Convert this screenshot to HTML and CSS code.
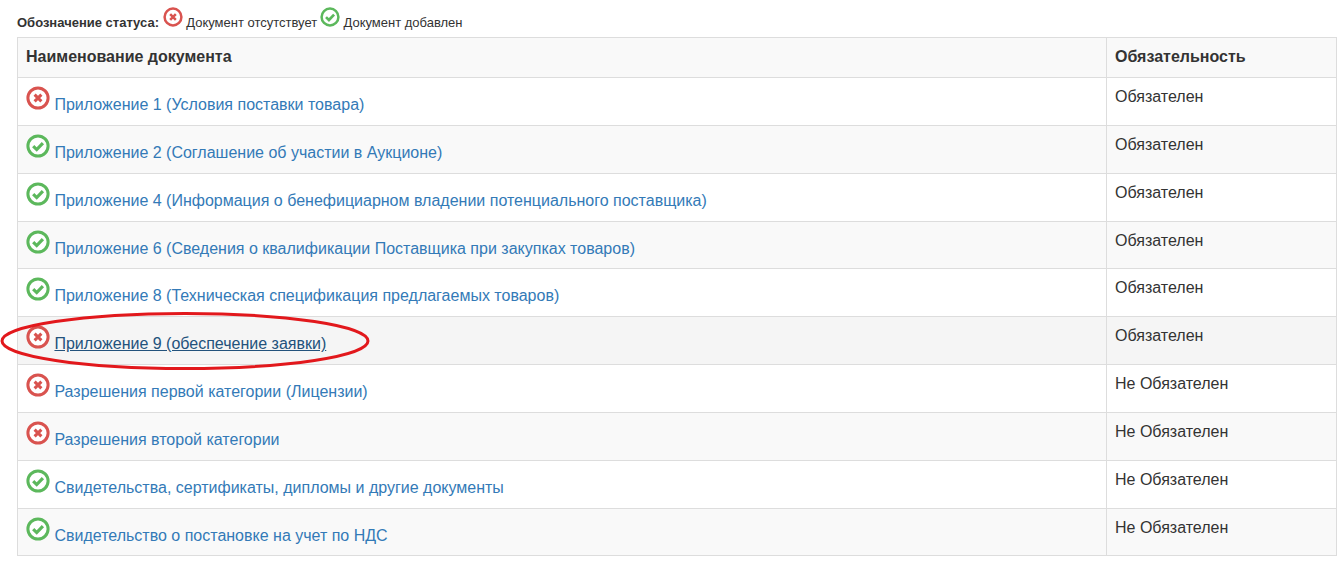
FILE: index.html
```html
<!DOCTYPE html>
<html lang="ru">
<head>
<meta charset="utf-8">
<title>Документы</title>
<link rel="stylesheet" href="styles.css">
</head>
<body>
<svg width="0" height="0" class="defs">
  <symbol id="no" viewBox="0 0 24 24"><circle cx="12" cy="12" r="10.1" fill="#fff" stroke="#d9534f" stroke-width="3"/><path d="M8.6 8.6l6.8 6.8M15.4 8.6l-6.8 6.8" fill="none" stroke="#d9534f" stroke-width="3"/></symbol>
  <symbol id="yes" viewBox="0 0 24 24"><circle cx="12" cy="12" r="10.1" fill="#fff" stroke="#5cb85c" stroke-width="3"/><path d="M7.2 12.2l3.5 3.4 6.2-6.4" fill="none" stroke="#5cb85c" stroke-width="3.2"/></symbol>
</svg>
<main class="page">
  <p class="legend"><b>Обозначение статуса:</b> <svg class="ico-s"><use href="#no"/></svg> Документ отсутствует <svg class="ico-s ico-tight"><use href="#yes"/></svg> Документ добавлен</p>
  <table class="docs">
    <thead><tr><th class="name">Наименование документа</th><th class="req">Обязательность</th></tr></thead>
    <tbody>
      <tr><td><svg class="ico"><use href="#no"/></svg> <a href="#">Приложение 1 (Условия поставки товара)</a></td><td>Обязателен</td></tr>
      <tr><td><svg class="ico"><use href="#yes"/></svg> <a href="#">Приложение 2 (Соглашение об участии в Аукционе)</a></td><td>Обязателен</td></tr>
      <tr><td><svg class="ico"><use href="#yes"/></svg> <a href="#">Приложение 4 (Информация о бенефициарном владении потенциального поставщика)</a></td><td>Обязателен</td></tr>
      <tr><td><svg class="ico"><use href="#yes"/></svg> <a href="#">Приложение 6 (Сведения о квалификации Поставщика при закупках товаров)</a></td><td>Обязателен</td></tr>
      <tr><td><svg class="ico"><use href="#yes"/></svg> <a href="#">Приложение 8 (Техническая спецификация предлагаемых товаров)</a></td><td>Обязателен</td></tr>
      <tr class="hover"><td><svg class="ico"><use href="#no"/></svg> <a href="#">Приложение 9 (обеспечение заявки)</a></td><td>Обязателен</td></tr>
      <tr><td><svg class="ico"><use href="#no"/></svg> <a href="#">Разрешения первой категории (Лицензии)</a></td><td>Не Обязателен</td></tr>
      <tr><td><svg class="ico"><use href="#no"/></svg> <a href="#">Разрешения второй категории</a></td><td>Не Обязателен</td></tr>
      <tr><td><svg class="ico"><use href="#yes"/></svg> <a href="#">Свидетельства, сертификаты, дипломы и другие документы</a></td><td>Не Обязателен</td></tr>
      <tr><td><svg class="ico"><use href="#yes"/></svg> <a href="#">Свидетельство о постановке на учет по НДС</a></td><td>Не Обязателен</td></tr>
    </tbody>
  </table>
  <svg class="mark" width="372" height="60" viewBox="0 0 372 60"><ellipse cx="185" cy="29" rx="183" ry="27.5" fill="none" stroke="#e2181c" stroke-width="3"/></svg>
</main>
</body>
</html>
```
FILE: styles.css
```css
html, body { margin: 0; padding: 0; background: #fff; }
body { font-family: "Liberation Sans", Arial, sans-serif; font-size: 16px; line-height: 22.857px; color: #333; }
.defs { position: absolute; }
.page { position: relative; padding: 7px 5px 0 17px; }
.legend { margin: 0 0 4px; font-size: 13px; line-height: 26px; height: 26px; color: #333; }
.ico-s { width: 20px; height: 20px; vertical-align: 0; }
.ico-tight { margin-left: -1px; }
.ico { width: 24px; height: 24px; vertical-align: 0; }
.docs { width: 100%; border-collapse: collapse; table-layout: fixed; }
.docs th, .docs td { border: 1px solid #ddd; padding: 8px; text-align: left; vertical-align: top; }
.docs th { font-weight: 700; height: 23px; background: #f9f9f9; vertical-align: middle; }
.docs .req { width: 213px; }
.docs tbody tr { height: 47.75px; }
.docs tbody tr:last-child { height: 47px; }
.docs tbody tr:last-child td { padding-bottom: 7px; }
.docs tbody tr:nth-child(even) { background: #f9f9f9; }
.docs tbody tr.hover { background: #f5f5f5; }
a { color: #337ab7; text-decoration: none; }
.hover a { color: #23527c; text-decoration: underline; }
.mark { position: absolute; left: 0; top: 312px; pointer-events: none; }
```
